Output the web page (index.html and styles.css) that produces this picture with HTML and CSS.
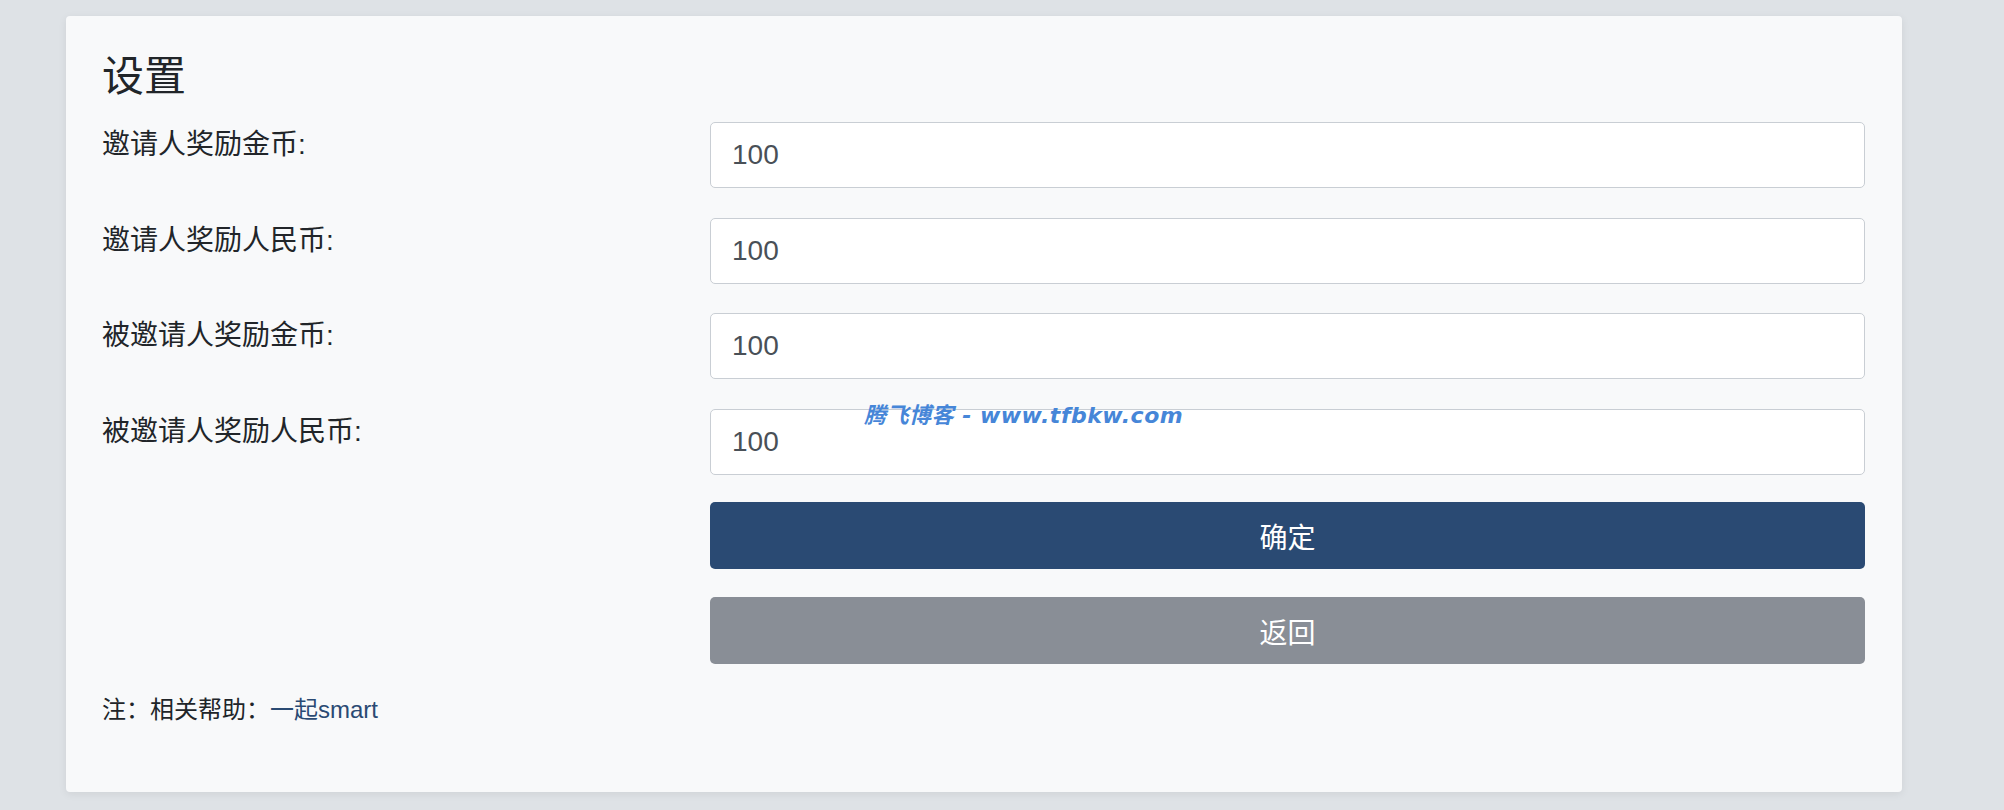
FILE: index.html
```html
<!DOCTYPE html>
<html lang="zh-CN">
<head>
<meta charset="utf-8">
<title>设置</title>
<link rel="stylesheet" href="styles.css">
</head>
<body>
<div class="page">
  <div class="card">
    <h3 class="title">设置</h3>
    <form class="form">
      <div class="fields">
        <div class="row">
          <label class="label">邀请人奖励金币:</label>
          <input class="field" type="text" value="100">
        </div>
        <div class="row">
          <label class="label">邀请人奖励人民币:</label>
          <input class="field" type="text" value="100">
        </div>
        <div class="row">
          <label class="label">被邀请人奖励金币:</label>
          <input class="field" type="text" value="100">
        </div>
        <div class="row">
          <label class="label">被邀请人奖励人民币:</label>
          <input class="field" type="text" value="100">
        </div>
      </div>
      <div class="actions">
        <div class="row">
          <span class="spacer"></span>
          <button class="btn btn-primary" type="button">确定</button>
        </div>
        <div class="row">
          <span class="spacer"></span>
          <button class="btn btn-secondary" type="button">返回</button>
        </div>
      </div>
    </form>
    <p class="note">注：相关帮助：<a class="link" href="#">一起smart</a></p>
    <div class="watermark">腾飞博客 - www.tfbkw.com</div>
  </div>
</div>
</body>
</html>
```

FILE: styles.css
```css
* {
  box-sizing: border-box;
}

html, body {
  margin: 0;
  padding: 0;
  background: #dee2e6;
}

body {
  font-family: "Liberation Sans", "Noto Sans CJK SC", sans-serif;
  color: #212529;
  font-size: 28px;
}

.page {
  padding: 16px 102px 18px 66px;
}

.card {
  position: relative;
  background: #f8f9fa;
  border-radius: 4px;
  box-shadow: 0 2px 8px rgba(0, 0, 0, 0.07);
  padding: 36px 37px 36px 36px;
}

.title {
  margin: 0 0 20px 0;
  font-size: 42px;
  line-height: 50px;
  font-weight: 400;
  color: #212529;
}

.form {
  margin: 0;
}

.fields {
  display: flex;
  flex-direction: column;
  gap: 29.5px;
}

.actions {
  display: flex;
  flex-direction: column;
  gap: 28px;
  margin-top: 27.5px;
}

.row {
  display: grid;
  grid-template-columns: 608px 1fr;
  align-items: start;
}

.label {
  padding-top: 4px;
  font-size: 28px;
  line-height: 38px;
  color: #212529;
}

.field {
  display: block;
  width: 100%;
  height: 66px;
  padding: 0 21px;
  font-family: "Liberation Sans", "Noto Sans CJK SC", sans-serif;
  font-size: 28px;
  color: #495057;
  background: #ffffff;
  border: 1px solid #c9ced4;
  border-radius: 5px;
  outline: none;
}

.btn {
  display: block;
  width: 100%;
  height: 67px;
  border: 0;
  border-radius: 5px;
  font-family: "Liberation Sans", "Noto Sans CJK SC", sans-serif;
  font-size: 28px;
  color: #ffffff;
  padding: 0;
  cursor: pointer;
}

.btn-primary {
  background: #2a4a73;
}

.btn-secondary {
  background: #898e96;
}

.note {
  margin: 28px 0 28px 0;
  font-size: 24px;
  line-height: 36px;
  color: #212529;
}

.link {
  color: #2a4a73;
  text-decoration: none;
}

.watermark {
  position: absolute;
  left: 798px;
  top: 389px;
  font-family: "DejaVu Sans", "Noto Sans CJK SC", sans-serif;
  font-size: 22px;
  line-height: 22px;
  font-weight: 700;
  font-style: italic;
  letter-spacing: 0.5px;
  color: #4686d8;
  white-space: nowrap;
  pointer-events: none;
}
```
